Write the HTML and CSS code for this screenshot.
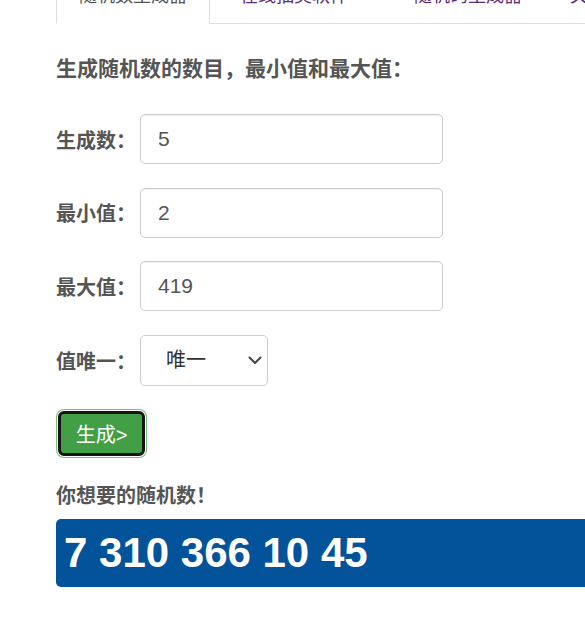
FILE: index.html
```html
<!DOCTYPE html>
<html lang="zh">
<head>
<meta charset="utf-8">
<title>随机数生成器</title>
<link rel="stylesheet" href="styles.css">
</head>
<body>
<div class="page">
  <ul class="tabs">
    <li class="tab active"><a href="#">随机数生成器</a></li>
    <li class="tab second"><a href="#">在线抽奖软件</a></li>
    <li class="tab"><a href="#">随机码生成器</a></li>
    <li class="tab"><a href="#">关于我们</a></li>
  </ul>

  <h2 class="heading">生成随机数的数目，最小值和最大值：</h2>

  <form class="form">
    <div class="row">
      <label class="label" for="count">生成数：</label>
      <input class="field" id="count" type="text" value="5">
    </div>
    <div class="row">
      <label class="label" for="min">最小值：</label>
      <input class="field" id="min" type="text" value="2">
    </div>
    <div class="row">
      <label class="label" for="max">最大值：</label>
      <input class="field" id="max" type="text" value="419">
    </div>
    <div class="row">
      <label class="label" for="uniq">值唯一：</label>
      <div class="select-wrap">
        <select class="select" id="uniq">
          <option>唯一</option>
          <option>不唯一</option>
        </select>
        <svg class="chevron" width="14" height="9" viewBox="0 0 14 9" aria-hidden="true">
          <path d="M1.5 1.5 L7 7 L12.5 1.5" fill="none" stroke="#444" stroke-width="2" stroke-linecap="round" stroke-linejoin="round"/>
        </svg>
      </div>
    </div>
    <button class="btn" type="button">生成&gt;</button>
  </form>

  <p class="result-label">你想要的随机数！</p>
  <div class="result">7 310 366 10 45</div>
</div>
</body>
</html>
```

FILE: styles.css
```css
html, body {
  margin: 0;
  padding: 0;
  background: #fff;
  overflow: hidden;
}

body {
  font-family: "Liberation Sans", "Noto Sans CJK SC", sans-serif;
  color: #555;
}

.page {
  padding-left: 56px;
}

.tabs {
  list-style: none;
  margin: -22px 0 0 0;
  padding: 0;
  display: flex;
  border-bottom: 1px solid #ddd;
  width: 700px;
}

.tab {
  margin-right: 2px;
  margin-bottom: -1px;
}

.tab a {
  display: block;
  padding: 4px 22px 14px;
  line-height: 26px;
  font-size: 18px;
  color: #5b2a7e;
  text-decoration: none;
  border: 1px solid transparent;
  white-space: nowrap;
}

.tab.second a {
  padding-left: 27px;
  padding-right: 40px;
}

.tab.active a {
  color: #555;
  background: #fff;
  border-color: #ddd #ddd transparent #ddd;
}

.heading {
  margin: 30px 0 0 0;
  font-size: 21px;
  line-height: 30px;
  font-weight: bold;
  color: #555;
}

.form {
  margin: 30px 0 0 0;
  display: flex;
  flex-direction: column;
  align-items: flex-start;
}

.row {
  display: flex;
  align-items: center;
  margin-bottom: 23.67px;
}

.label {
  width: 84px;
  font-size: 20px;
  font-weight: bold;
  color: #555;
}

.field {
  box-sizing: border-box;
  width: 303px;
  height: 50px;
  padding: 0 17px;
  border: 1px solid #ccc;
  border-radius: 5px;
  font-family: "Liberation Sans", "Noto Sans CJK SC", sans-serif;
  font-size: 21px;
  color: #555;
  background: #fff;
  box-shadow: inset 0 1px 1px rgba(0,0,0,0.06);
  outline: none;
}

.select-wrap {
  position: relative;
  width: 128px;
  height: 51px;
}

.select {
  appearance: none;
  -webkit-appearance: none;
  box-sizing: border-box;
  width: 100%;
  height: 100%;
  padding: 0 0 0 25px;
  border: 1px solid #ccc;
  border-radius: 5px;
  background: #fff;
  font-family: "Liberation Sans", "Noto Sans CJK SC", sans-serif;
  font-size: 20px;
  color: #333;
  outline: none;
}

.chevron {
  position: absolute;
  right: 6px;
  top: 21px;
  pointer-events: none;
}

.btn {
  margin: 1.33px 0 0 2px;
  box-sizing: border-box;
  width: 87px;
  height: 45px;
  padding: 0;
  background: #439f45;
  border: 3px solid #151515;
  border-radius: 6px;
  box-shadow: 0 0 0 1px #fff, 0 0 0 2px #7fb97f;
  color: #fff;
  font-family: "Liberation Sans", "Noto Sans CJK SC", sans-serif;
  font-size: 20px;
  cursor: pointer;
}

.result-label {
  margin: 27px 0 0 0;
  font-size: 20px;
  line-height: 26px;
  font-weight: bold;
  color: #555;
}

.result {
  margin-top: 10px;
  width: 640px;
  box-sizing: border-box;
  padding: 10px 8px;
  line-height: 48px;
  background: #02539a;
  border-radius: 5px;
  color: #fff;
  font-size: 42px;
  font-weight: bold;
}
```
